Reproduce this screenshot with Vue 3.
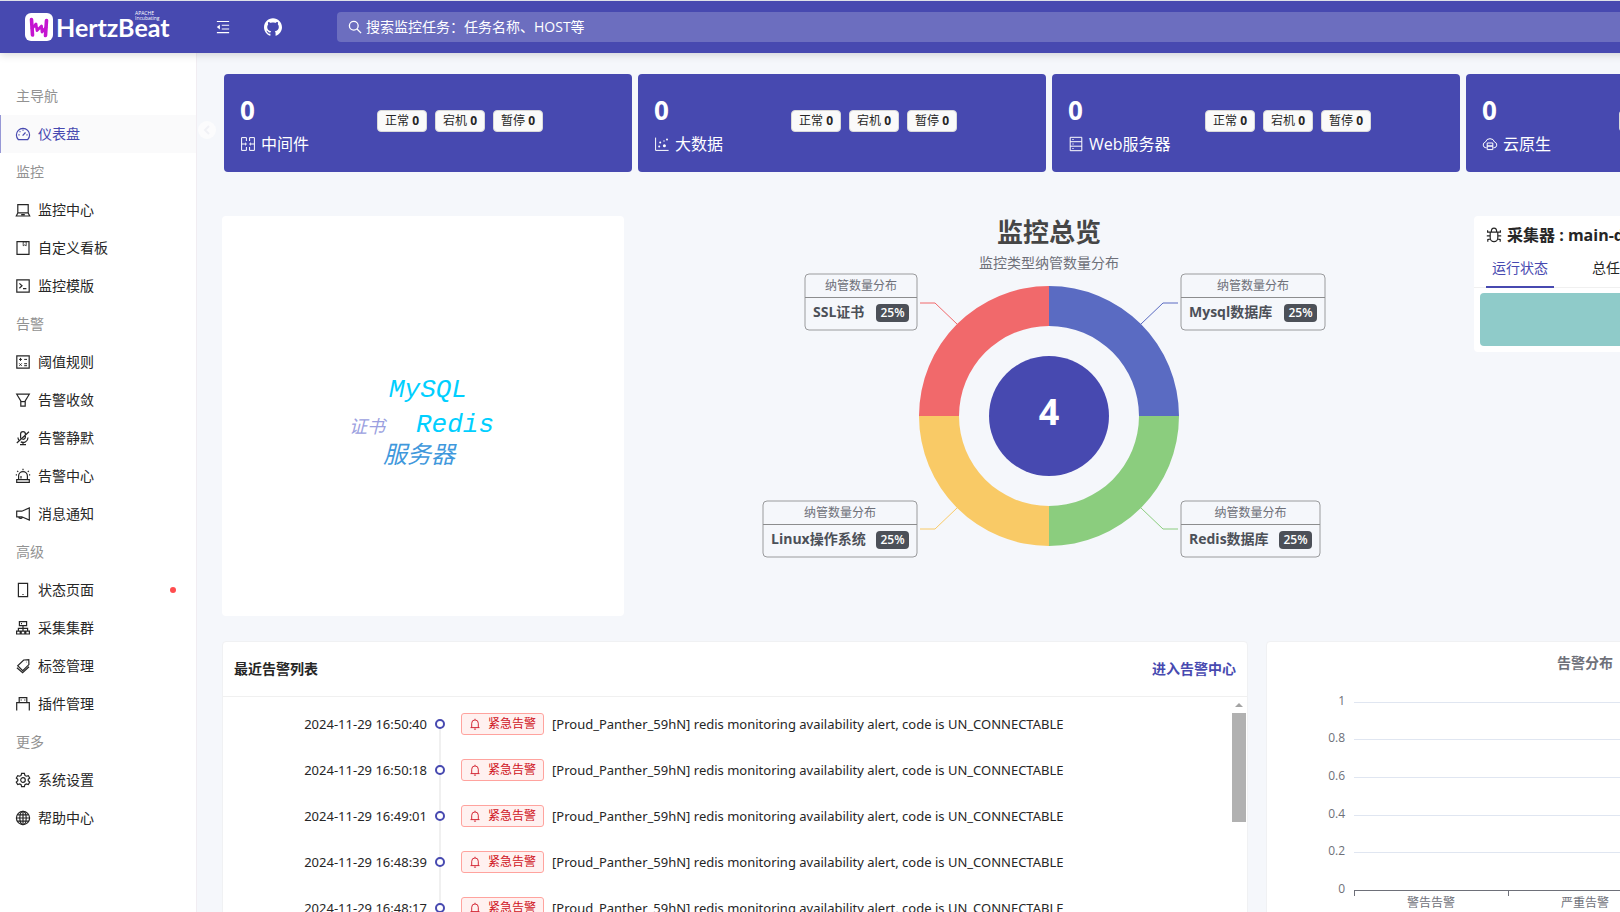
<script setup>
const icons = {
  dashboard: '<path d="M3.4 13.7h9.2a6.6 6.6 0 1 0-9.2 0z"/><path d="M7.6 9.6l2.9-3.1M8 3.6v1.2M4.6 5.4l.8.8M3.4 8.9h1.2M11.4 8.9h1.2"/>',
  laptop: '<path d="M2.8 2.7h10.4v8.2H2.8zM2.8 10.9 1.3 14h13.4l-1.5-3.1M6.2 12.6h3.6"/>',
  book: '<path d="M2 1.6h12v12.8H2z"/><path d="M8.2 1.8h3v4L9.700 4.900 8.200 5.800z" stroke-width=".8"/>',
  code: '<path d="M1.8 1.8h12.4v12.4H1.8z"/><path d="M4.4 5.4 7 7.8l-2.6 2.4M8 10.6h3.4"/>',
  calculator: '<path d="M1.8 1.8h12.4v12.4H1.8z"/><path d="M4 5.4h3M5.5 3.9v3M9.2 5.4h2.8M4.3 9.4l2.4 2.4M6.7 9.4l-2.4 2.4M9.2 9.7h2.8M9.2 11.7h2.8" stroke-width="1"/>',
  filter: '<path d="M1.7 2.2h12.6L10.2 9v5.2H5.8V9z"/><path d="M5.8 9.6h4.4"/>',
  mute: '<path d="M5.6 8.4V4a2.4 2.4 0 0 1 4.8 0v2.8a2.4 2.4 0 0 1-3 2.5M3 7.4c0 1 .3 1.900.8 2.700M13 7.400a5 5 0 0 1-7.200 4.500M8 12.400v2.200M5 14.600h6M14 1.800 1.800 13"/>',
  siren: '<path d="M3.600 11.400V8a4.400 4.400 0 0 1 8.800 0v3.400M1.700 11.600h12.600v2.800H1.700zM8 .8v1.400M2.200 2.800l1 1.100M13.800 2.800l-1 1.100M.8 6.800h1.200M14 6.800h1.200M6 10.600V8"/>',
  horn: '<path d="M14.300 2v12L6.800 10.800H1.700V5.200h5.100zM3.600 10.800a2 2 0 0 0 3.800.4"/>',
  mobile: '<path d="M3.400 1.300h9.200v13.400H3.400zM7.400 12.500h1.200"/>',
  cluster: '<path d="M4.400 1.600h7.200v4H4.400zM8 5.600v6M3.400 11V8.400h9.200V11M1.600 11.200h3.600v2.800H1.600zM6.200 11.200h3.600v2.800H6.200zM10.800 11.200h3.600v2.800h-3.600zM6 3.600h1"/>',
  tags: '<path d="M8.700 2 13.800 1.700l.1 4.900-6.200 6.100-5-5zM1.900 9.700l5.700 5 6.400-6"/><path d="M11.300 4.200h.4"/>',
  plugin: '<path d="M4.200 1.600h7.600v5H4.200zM1.700 14.600V6.700h12.600v7.900M6.200 3.600v1M9.800 3.600v1"/>',
  setting: '<path d="M6.600 1.400h2.800l.5 2 1.400.8 2-.6 1.400 2.400L13.200 7.300v1.500l1.500 1.300-1.400 2.400-2-.6-1.400.8-.5 2H6.600l-.5-2-1.400-.8-2 .6-1.400-2.400 1.500-1.300V7.300L1.300 6l1.400-2.400 2 .6 1.400-.8z"/><circle cx="8" cy="8" r="2.300"/>',
  global: '<circle cx="8" cy="8" r="6.600"/><ellipse cx="8" cy="8" rx="3.200" ry="6.600"/><path d="M8 1.400v13.200M1.400 8h13.200M2.600 4.800h10.800M2.600 11.200h10.800"/>',
  middleware: '<path d="M6.400 5V1.600H1.600v12.800h4.800V11M9.600 5V1.600h4.800v12.800H9.600V11M1.600 8h4.600M9.800 8h4.600M5 6.700 6.400 8 5 9.300M11 6.700 9.600 8l1.400 1.300"/>',
  scatter: '<path d="M1.600 1.600v12.800h13"/><g fill="currentColor" stroke="none"><circle cx="5.200" cy="10.400" r="1"/><circle cx="6.200" cy="6.600" r="1"/><circle cx="10.400" cy="9.800" r="1.500"/><circle cx="13" cy="3.600" r="1"/><circle cx="10" cy="5" r=".7"/></g>',
  server: '<path d="M2.200 1.300h11.600v13.400H2.200zM2.200 5.700h11.600M2.200 10.200h11.600M4.400 3.500h1.200M4.400 8h1.200M4.400 12.500h1.200"/>',
  cloud: '<path d="M4.600 11.800H3.900a2.900 2.900 0 0 1-.5-5.700 4.800 4.800 0 0 1 9.200 0 2.900 2.900 0 0 1-.5 5.700h-.7M5.200 7h5.600v3H5.200zM5.200 10h5.600v3.600H5.200z"/>',
  bug: '<path d="M4.200 5.200h7.600v5.600a3.800 3.800 0 0 1-7.600 0zM5.300 5a2.700 3.800 0 0 1 5.400 0M.8 8.800h3.400M11.800 8.800h3.400M1.600 3.200v2h2.600M14.400 3.200v2h-2.600M1.800 14.800v-2.200l2.600-.6M14.200 14.800v-2.200l-2.600-.6"/>',
  bell: '<path d="M3.600 12.600V7a4.400 4.400 0 0 1 8.800 0v5.600M2 12.800h12M6.600 14.800h2.800M8 1v1.400"/>',
  search: '<circle cx="6.600" cy="6.600" r="5"/><path d="m10.300 10.300 4.700 4.700"/>',
  fold: '<path d="M1 1.700h14M6.600 6h8.400M6.600 10.200h8.400M1 14.400h14"/><path d="M4.400 5.400.9 8.100l3.500 2.700z" fill="currentColor" stroke="none"/>',
}

const menu = [
  { title: '主导航', items: [{ icon: 'dashboard', text: '仪表盘', active: true }] },
  {
    title: '监控',
    items: [
      { icon: 'laptop', text: '监控中心' },
      { icon: 'book', text: '自定义看板' },
      { icon: 'code', text: '监控模版' },
    ],
  },
  {
    title: '告警',
    items: [
      { icon: 'calculator', text: '阈值规则' },
      { icon: 'filter', text: '告警收敛' },
      { icon: 'mute', text: '告警静默' },
      { icon: 'siren', text: '告警中心' },
      { icon: 'horn', text: '消息通知' },
    ],
  },
  {
    title: '高级',
    items: [
      { icon: 'mobile', text: '状态页面', dot: true },
      { icon: 'cluster', text: '采集集群' },
      { icon: 'tags', text: '标签管理' },
      { icon: 'plugin', text: '插件管理' },
    ],
  },
  {
    title: '更多',
    items: [
      { icon: 'setting', text: '系统设置' },
      { icon: 'global', text: '帮助中心' },
    ],
  },
]

const cards = [
  { icon: 'middleware', name: '中间件' },
  { icon: 'scatter', name: '大数据' },
  { icon: 'server', name: 'Web服务器' },
  { icon: 'cloud', name: '云原生' },
]
const states = ['正常', '宕机', '暂停']

const slices = [
  { color: '#5a6bc2', d: 'M0-130A130 130 0 0 1 130 0H90A90 90 0 0 0 0-90z', line: '92,-92 114,-113 129,-113' },
  { color: '#8bcd7e', d: 'M130 0A130 130 0 0 1 0 130V90A90 90 0 0 0 90 0z', line: '92,92 114,113 129,113' },
  { color: '#f9ca66', d: 'M0 130A130 130 0 0 1-130 0H-90A90 90 0 0 0 0 90z', line: '-92,92 -114,113 -129,113' },
  { color: '#f1696b', d: 'M-130 0A130 130 0 0 1 0-130V-90A90 90 0 0 0-90 0z', line: '-92,-92 -114,-113 -129,-113' },
]
const labels = [
  { name: 'SSL证书', x: -244, y: -142, w: 112 },
  { name: 'Mysql数据库', x: 132, y: -142, w: 144 },
  { name: 'Linux操作系统', x: -286, y: 85, w: 154 },
  { name: 'Redis数据库', x: 132, y: 85, w: 139 },
]

const times = ['16:50:40', '16:50:18', '16:49:01', '16:48:39', '16:48:17']

const gridLines = [
  { v: '1', y: 60 },
  { v: '0.8', y: 97 },
  { v: '0.6', y: 135 },
  { v: '0.4', y: 173 },
  { v: '0.2', y: 210 },
]
const categories = [
  { text: '警告告警', x: -154 },
  { text: '严重告警', x: 0 },
  { text: '紧急告警', x: 154 },
]
</script>

<template>
  <div class="app">
    <header class="topbar">
      <a class="brand" href="#" aria-label="HertzBeat">
        <svg class="brand-mark" viewBox="0 0 28 28" aria-hidden="true">
          <rect width="28" height="28" rx="6" fill="#fff" />
          <g fill="none" stroke="#c414d0" stroke-linecap="round" stroke-linejoin="round">
            <path d="M6.500 6.500 7.500 22M21.500 7.500 20.500 22.500" stroke-width="3.600" />
            <path d="M7 15.500 11 11l1 6.500 4.500-4.500.5 6 4-4.500" stroke-width="2.800" />
          </g>
        </svg>
        <span class="brand-name">HertzBeat</span>
        <span class="brand-note">APACHE<br />Incubating</span>
      </a>
      <button class="bar-btn" type="button" aria-label="收起菜单"><svg class="ico fold" viewBox="0 0 16 16" v-html="icons.fold" /></button>
      <a class="bar-btn github" href="#" aria-label="GitHub">
        <svg viewBox="64 64 896 896">
          <path fill="currentColor" d="M511.6 76.3C264.3 76.2 64 276.4 64 523.5 64 718.9 189.3 885 363.8 946c23.5 5.9 19.9-10.8 19.9-22.2v-77.5c-135.7 15.9-141.2-73.9-150.3-88.9C215 726 171.5 718 184.5 703c30.900-15.900 62.400 4 98.900 57.900 26.400 39.100 77.900 32.500 104 26 5.700-23.500 17.900-44.500 34.700-60.800-140.600-25.200-199.200-111-199.200-213 0-49.500 16.300-95 48.300-131.700-20.400-60.500 1.900-112.300 4.900-120 58.100-5.200 118.500 41.600 123.200 45.300 33-8.900 70.700-13.600 112.900-13.600 42.400 0 80.200 4.900 113.500 13.900 11.300-8.600 67.300-48.800 121.300-43.900 2.900 7.700 24.700 58.300 5.500 118 32.400 36.800 48.900 82.700 48.900 132.300 0 102.200-59 188.100-200 212.900a127.500 127.500 0 0138.100 91v112.500c.8 9 0 17.900 15 17.900 177.100-59.700 304.600-227 304.600-424.100 0-247.200-200.400-447.300-447.500-447.300z" />
        </svg>
      </a>
      <label class="search">
        <svg class="ico" viewBox="0 0 16 16" aria-hidden="true" v-html="icons.search" />
        <input type="text" aria-label="搜索" placeholder="搜索监控任务：任务名称、HOST等" />
      </label>
    </header>

    <div class="body">
      <nav class="sidebar" aria-label="主导航">
        <section v-for="group in menu" :key="group.title">
          <h2>{{ group.title }}</h2>
          <a v-for="item in group.items" :key="item.text" href="#" :class="{ active: item.active }">
            <svg class="ico" viewBox="0 0 16 16" aria-hidden="true" v-html="icons[item.icon]" />
            <span>{{ item.text }}</span>
            <i v-if="item.dot" class="dot" />
          </a>
        </section>
      </nav>

      <main class="content">
        <button class="prev" type="button" aria-label="上一页">
          <svg viewBox="0 0 18 18"><circle cx="9" cy="9" r="9" fill="#fcfcfd" /><path d="M11 5 7 9l4 4" fill="none" stroke="#f1f2f6" stroke-width="2" /></svg>
        </button>

        <div class="cards">
          <article v-for="card in cards" :key="card.name" class="card">
            <div class="card-main">
              <strong>0</strong>
              <span class="card-name"><svg class="ico" viewBox="0 0 16 16" aria-hidden="true" v-html="icons[card.icon]" />{{ card.name }}</span>
            </div>
            <span v-for="s in states" :key="s" class="state">{{ s }} <b>0</b></span>
          </article>
        </div>

        <div class="overview">
          <section class="panel cloud">
            <svg viewBox="-200 -200 400 400" role="img" aria-label="词云">
              <g class="mono" fill="#00cfff">
                <text x="-34" y="-19" font-size="26">MySQL</text>
                <text x="-7" y="16" font-size="26">Redis</text>
              </g>
              <text class="slant" x="-74" y="17" font-size="18" fill="#9b9fe0">证书</text>
              <text class="slant" x="-40" y="47" font-size="24" fill="#3f98dc">服务器</text>
            </svg>
          </section>

          <section class="donut">
            <svg viewBox="-400 -200 800 400" role="img" aria-label="监控总览">
              <text class="donut-title" y="-174">监控总览</text>
              <text class="donut-sub" y="-148">监控类型纳管数量分布</text>
              <g v-for="s in slices" :key="s.color">
                <path :d="s.d" :fill="s.color" />
                <polyline :points="s.line" :stroke="s.color" fill="none" />
              </g>
              <circle r="60" fill="#4749b0" />
              <text class="donut-total" y="9">4</text>
              <g v-for="l in labels" :key="l.name" :transform="`translate(${l.x} ${l.y})`">
                <rect :width="l.w" height="56" rx="4" fill="none" stroke="#9a9b9d" />
                <path :d="`M0 23.500H${l.w}`" stroke="#8c8d8e" />
                <text class="label-head" :x="l.w / 2" y="16">纳管数量分布</text>
                <text class="label-name" x="8" y="43">{{ l.name }}</text>
                <rect :x="l.w - 41" y="30" width="33" height="18" rx="4" fill="#4c5058" />
                <text class="label-rate" :x="l.w - 24.500" y="43">25%</text>
              </g>
            </svg>
          </section>

          <section class="panel collector">
            <h3><svg class="ico" viewBox="0 0 16 16" aria-hidden="true" v-html="icons.bug" />采集器 : main-default-collector</h3>
            <div class="tabs" role="tablist">
              <button type="button" role="tab" aria-selected="true" class="on">运行状态</button>
              <button type="button" role="tab" aria-selected="false">总任务数</button>
            </div>
            <div class="status" />
          </section>
        </div>

        <div class="bottom">
          <section class="panel alerts">
            <header>
              <h3>最近告警列表</h3>
              <a href="#">进入告警中心</a>
            </header>
            <div class="alert-body">
              <ol>
                <li v-for="t in times" :key="t">
                  <time>2024-11-29 {{ t }}</time>
                  <span class="node"><i /></span>
                  <span class="level"><svg class="ico" viewBox="0 0 16 16" aria-hidden="true" v-html="icons.bell" />紧急告警</span>
                  <span class="msg">[Proud_Panther_59hN] redis monitoring availability alert, code is UN_CONNECTABLE</span>
                </li>
              </ol>
              <div class="scroll" aria-hidden="true"><i class="up" /><i class="thumb" /></div>
            </div>
          </section>

          <section class="panel bars">
            <svg viewBox="-310 0 620 300" role="img" aria-label="告警分布">
              <text class="bars-title" y="26">告警分布</text>
              <g v-for="g in gridLines" :key="g.v">
                <path :d="`M-231 ${g.y + 0.500}H231`" stroke="#e0e6f1" />
                <text class="tick" x="-240" :y="g.y + 3">{{ g.v }}</text>
              </g>
              <text class="tick" x="-240" y="251">0</text>
              <path d="M-231 248.500H231M-230.500 248v6M-76.500 248v6M77.500 248v6M230.500 248v6" stroke="#6e7079" />
              <text v-for="c in categories" :key="c.text" class="cat" :x="c.x" y="265">{{ c.text }}</text>
            </svg>
          </section>
        </div>
      </main>
    </div>
  </div>
</template>

<style>
body {
  margin: 0;
  overflow: hidden;
}
</style>

<style scoped>
.app {
  min-width: 1920px;
  height: 100vh;
  display: flex;
  flex-direction: column;
  overflow: hidden;
  background: #f5f7fb;
  color: #262626;
  font: 14px/22px "Open Sans", "Noto Sans CJK SC", sans-serif;
}
.app *,
.app *::before {
  box-sizing: border-box;
}
h2,
h3,
ol {
  margin: 0;
  padding: 0;
}
a {
  color: inherit;
  text-decoration: none;
}
button {
  padding: 0;
  border: 0;
  background: none;
  font: inherit;
  color: inherit;
}
svg {
  display: block;
}
.ico {
  flex: none;
  width: 16px;
  height: 16px;
  fill: none;
  stroke: currentColor;
  stroke-width: 1.2;
}

.topbar {
  flex: none;
  display: flex;
  align-items: center;
  height: 53px;
  padding-left: 25px;
  border-top: 1px solid #dde0e8;
  background: #4749b0;
  color: #fff;
  box-shadow: 0 2px 8px rgba(0, 0, 0, 0.15);
  z-index: 2;
}
.brand {
  position: relative;
  display: flex;
  align-items: center;
  gap: 3px;
  width: 191px;
}
.brand-mark {
  width: 28px;
  height: 28px;
}
.brand-name {
  font: bold 25px/28px Lato, "Open Sans", sans-serif;
}
.brand-note {
  position: absolute;
  left: 110px;
  top: -2px;
  font-size: 5px;
  line-height: 5px;
}
.topbar .fold {
  width: 14px;
  height: 14px;
}
.github {
  margin-left: 34px;
}
.github svg {
  width: 18px;
  height: 18px;
}
.search {
  flex: 1;
  display: flex;
  align-items: center;
  gap: 4px;
  height: 30px;
  margin: 0 280px 0 55px;
  padding: 0 11px;
  border-radius: 4px;
  background: #6c6ebf;
}
.search .ico {
  width: 14px;
  height: 14px;
  stroke-width: 1.5;
}
.search input {
  flex: 1;
  padding: 0;
  border: 0;
  outline: 0;
  background: none;
  font: inherit;
  color: #fff;
}
.search input::placeholder {
  color: #fff;
  opacity: 1;
}

.body {
  flex: 1;
  display: flex;
  min-height: 0;
}
.sidebar {
  flex: none;
  width: 197px;
  padding-top: 24px;
  border-right: 1px solid #f1edf2;
  background: #fff;
}
.sidebar h2 {
  padding-left: 16px;
  font-size: 14px;
  line-height: 38px;
  font-weight: 400;
  color: #929292;
}
.sidebar a {
  display: flex;
  align-items: center;
  gap: 7px;
  height: 38px;
  padding: 0 20px 0 15px;
}
.sidebar a.active {
  border-left: 1px solid #9798d6;
  padding-left: 14px;
  background: #fafafb;
  color: #4749b0;
}
.dot {
  width: 6px;
  height: 6px;
  margin-left: auto;
  border-radius: 50%;
  background: #ff4d4f;
}

.content {
  position: relative;
  flex: 1;
  min-width: 0;
  padding: 21px 16px 0 25px;
}
.prev {
  position: absolute;
  left: 1px;
  top: 68px;
}
.prev svg {
  width: 18px;
  height: 18px;
}
.cards {
  display: flex;
  gap: 6px;
  margin: 0 0 44px 2px;
}
.card {
  flex: none;
  display: flex;
  align-items: center;
  gap: 8px;
  width: 408px;
  height: 98px;
  padding: 0 16px 4px;
  border-radius: 4px;
  background: #4749b0;
  color: #fff;
}
.card-main {
  display: flex;
  flex-direction: column;
  gap: 4px;
  width: 129px;
  padding-top: 6px;
}
.card-main strong {
  font-size: 26px;
  line-height: 36px;
}
.card-name {
  display: flex;
  align-items: center;
  gap: 5px;
  font-size: 16px;
  line-height: 24px;
  white-space: nowrap;
}
.card-name .ico {
  stroke-width: 1;
}
.state {
  padding: 0 7px;
  border: 1px solid #d9d9d9;
  border-radius: 4px;
  background: #fafafa;
  color: #262626;
  font-size: 12px;
  line-height: 20px;
  white-space: nowrap;
}

.panel {
  border-radius: 4px;
  background: #fff;
  overflow: hidden;
}
.overview {
  display: grid;
  grid-template-columns: 402fr 810fr 430fr;
  gap: 20px;
  align-items: start;
  margin-bottom: 25px;
}
.cloud svg,
.donut svg {
  width: 100%;
  height: 400px;
}
.mono {
  font-family: "Liberation Mono", monospace;
  font-style: italic;
}
.slant {
  font-style: italic;
}
.donut text,
.bars text {
  text-anchor: middle;
  fill: #6e7079;
}
.donut .donut-title {
  font-size: 26px;
  font-weight: 700;
  fill: #464646;
}
.donut-sub {
  font-size: 14px;
}
.donut .donut-total {
  font-size: 36px;
  font-weight: 700;
  fill: #fff;
}
.label-head {
  font-size: 12px;
}
.donut .label-name {
  text-anchor: start;
  font-size: 14px;
  font-weight: 700;
  fill: #4c5058;
}
.donut .label-rate {
  font-size: 12px;
  font-weight: 600;
  fill: #fff;
}
.collector {
  padding-bottom: 6px;
}
.collector h3 {
  display: flex;
  align-items: center;
  gap: 5px;
  padding: 7px 12px 0;
  font-size: 16px;
  line-height: 24px;
}
.tabs {
  display: flex;
  gap: 32px;
  height: 41px;
  margin-bottom: 5px;
  padding: 0 12px;
  border-bottom: 1px solid #f0f0f0;
}
.tabs button {
  height: 41px;
  padding: 2px 6px 0;
  border-bottom: 2px solid transparent;
}
.tabs .on {
  color: #4749b0;
  border-color: #4749b0;
}
.status {
  height: 53px;
  margin: 0 6px;
  border-radius: 4px;
  background: #8fcbc9;
}

.bottom {
  display: grid;
  grid-template-columns: 1026fr 638fr;
  gap: 18px;
}
.alerts,
.bars {
  height: 400px;
  border: 1px solid #f0f1f3;
}
.alerts header {
  display: flex;
  justify-content: space-between;
  align-items: center;
  height: 55px;
  padding: 0 11px;
  border-bottom: 1px solid #f0f0f0;
}
.alerts h3 {
  font-size: 14px;
  font-weight: 600;
}
.alerts header a {
  font-weight: 600;
  color: #4749b0;
}
.alert-body {
  display: flex;
  justify-content: space-between;
}
ol {
  flex: 1;
  padding-top: 4px;
  list-style: none;
}
li {
  display: flex;
  align-items: center;
  height: 46px;
  white-space: nowrap;
}
time,
.msg {
  font-family: "Noto Sans", "Open Sans", sans-serif;
  font-size: 13px;
}
time {
  width: 204px;
  text-align: right;
}
.node {
  position: relative;
  display: flex;
  align-items: center;
  justify-content: center;
  align-self: stretch;
  width: 26px;
  margin-right: 8px;
}
.node::before {
  content: "";
  position: absolute;
  top: 0;
  bottom: 0;
  left: 12px;
  width: 2px;
  background: #f0f0f0;
}
li:first-child .node::before {
  top: 23px;
}
.node i {
  z-index: 1;
  width: 10px;
  height: 10px;
  border: 2px solid #4749b0;
  border-radius: 50%;
  background: #fff;
}
.level {
  display: flex;
  align-items: center;
  gap: 7px;
  margin-right: 8px;
  padding: 0 7px;
  border: 1px solid #ffa39e;
  border-radius: 3px;
  background: #fff1f0;
  color: #cf1322;
  font-size: 12px;
  line-height: 20px;
}
.level .ico {
  width: 12px;
  height: 12px;
}
.scroll {
  width: 14px;
  margin-right: 1px;
}
.up {
  display: block;
  margin: 6px 3px;
  border: 4px solid transparent;
  border-top: 0;
  border-bottom-color: #a3a3a3;
}
.thumb {
  display: block;
  height: 109px;
  background: #b1b1b1;
}

.bars svg {
  width: 100%;
  height: 300px;
}
.bars-title {
  font-size: 14px;
  font-weight: 600;
}
.bars .tick {
  text-anchor: end;
  font-size: 12px;
}
.cat {
  font-size: 12px;
}
</style>
